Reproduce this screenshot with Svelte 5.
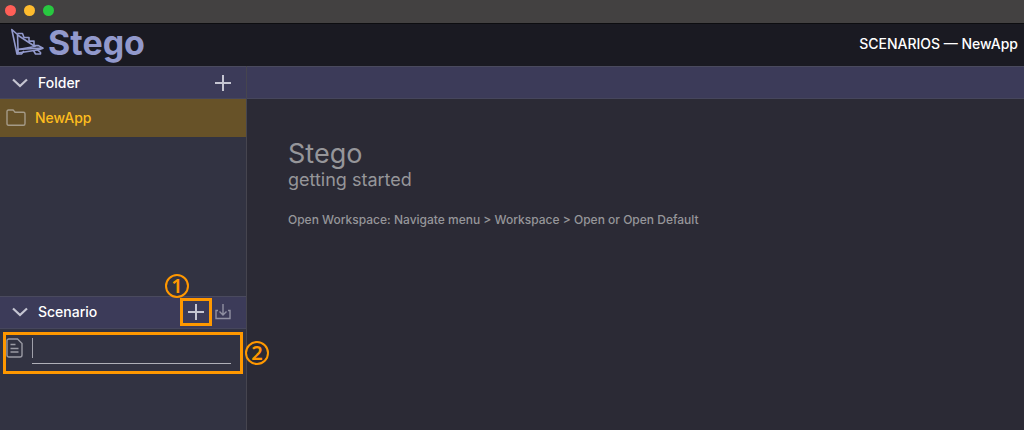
<script lang="ts">
	interface Folder {
		id: number;
		name: string;
	}

	const folders: Folder[] = [{ id: 1, name: 'NewApp' }];

	let selectedId = $state(1);
	let draftName = $state('');
	let folderOpen = $state(true);
	let scenarioOpen = $state(true);

	const selected = $derived(folders.find((f) => f.id === selectedId));
</script>

{#snippet chevron()}
	<svg width="16" height="10" viewBox="0 0 16 10" aria-hidden="true">
		<path d="M1 1.5 8 8l7-6.5" fill="none" stroke="currentColor" stroke-width="2.2" />
	</svg>
{/snippet}

{#snippet plus()}
	<svg width="16" height="16" viewBox="0 0 16 16" aria-hidden="true">
		<path d="M8 0v16M0 8h16" stroke="currentColor" stroke-width="2" />
	</svg>
{/snippet}

<div class="window">
	<div class="titlebar">
		<button type="button" class="light close" aria-label="Close"></button>
		<button type="button" class="light minimize" aria-label="Minimize"></button>
		<button type="button" class="light zoom" aria-label="Zoom"></button>
	</div>

	<header class="brandbar">
		<div class="brand">
			<svg width="34" height="30" viewBox="0 0 34 30" aria-hidden="true">
				<g fill="none" stroke="currentColor" stroke-width="1.6" stroke-linejoin="round">
					<path d="M1.8 1.5 7.5 6.500 8 21.500 7 26Z" />
					<path d="M7.3 5.5h5.200l1.500 4h5v3.600h5v4.500h4.500l4.500 2.600-4 1.500L8 25v-3.500l25-1.500" />
					<path d="M7.5 7 25 18.500 8 21.500" />
					<path d="M7 26h4.500l2.500-3M23.500 22.500l2 3.500h5v-1.500l-3-2.500" />
				</g>
			</svg>
			<span class="wordmark">Stego</span>
		</div>
		<div class="location">SCENARIOS — {selected?.name}</div>
	</header>

	<div class="workspace">
		<aside class="sidebar">
			<section>
				<div class="bar">
					<button type="button" class="fold" aria-expanded={folderOpen} onclick={() => (folderOpen = !folderOpen)}>
						{@render chevron()}
						<span>Folder</span>
					</button>
					<button type="button" class="action" aria-label="Add folder">{@render plus()}</button>
				</div>
				{#if folderOpen}
					{#each folders as folder (folder.id)}
						<button
							type="button"
							class="item"
							class:selected={folder.id === selectedId}
							onclick={() => (selectedId = folder.id)}
						>
							<svg width="20" height="18" viewBox="0 0 20 18" aria-hidden="true">
								<path
									d="M1 14.5v-12Q1 1 2.5 1h4.2q.8 0 1.3.8l1 1.4h8.5Q19 3.2 19 4.7v9.8q0 1.8-1.5 1.8h-15Q1 16.3 1 14.5Z"
									fill="none"
									stroke="currentColor"
									stroke-width="1.4"
								/>
							</svg>
							<span>{folder.name}</span>
						</button>
					{/each}
				{/if}
			</section>

			<section class="scenarios">
				<div class="bar">
					<button type="button" class="fold" aria-expanded={scenarioOpen} onclick={() => (scenarioOpen = !scenarioOpen)}>
						{@render chevron()}
						<span>Scenario</span>
					</button>
					<div class="step">
						<button type="button" class="action" aria-label="Add scenario">{@render plus()}</button>
						<span class="frame"></span>
						<span class="badge above">1</span>
					</div>
					<button type="button" class="action dim" aria-label="Import scenario">
						<svg width="16" height="16" viewBox="0 0 16 16" aria-hidden="true">
							<g fill="none" stroke="currentColor" stroke-width="1.4">
								<path d="M3 6.5H1v8h14v-8h-2" />
								<path d="M8 0v11M4.5 7.5 8 11l3.5-3.5" />
							</g>
						</svg>
					</button>
				</div>
				{#if scenarioOpen}
					<div class="step draft">
						<svg width="18" height="20" viewBox="0 0 18 20" aria-hidden="true">
							<g fill="none" stroke="currentColor" stroke-width="1.4">
								<path d="M3 1h8.5L16 5.500V17q0 2-2 2H3q-2 0-2-2V3q0-2 2-2Z" />
								<path d="M4.5 6.500h5M4.500 10.500h8M4.500 14h8" />
							</g>
						</svg>
						<label class="field">
							<span class="caret"></span>
							<input type="text" aria-label="Scenario name" bind:value={draftName} />
						</label>
						<span class="frame"></span>
						<span class="badge beside">2</span>
					</div>
				{/if}
			</section>
		</aside>

		<main>
			<div class="bar"></div>
			<div class="welcome">
				<h1>Stego</h1>
				<h2>getting started</h2>
				<p>Open Workspace: Navigate menu &gt; Workspace &gt; Open or Open Default</p>
			</div>
		</main>
	</div>
</div>

<style>
	:global(body) {
		margin: 0;
		background: #2b2a35;
	}
	.window {
		display: flex;
		flex-direction: column;
		min-height: 100vh;
		background: #2b2a35;
		color: #fff;
		font-family: Inter, 'Liberation Sans', sans-serif;
		font-size: 14px;
		font-weight: 500;
		line-height: 20px;
	}
	.window *,
	.window {
		box-sizing: border-box;
	}
	button,
	input {
		margin: 0;
		padding: 0;
		border: 0;
		background: none;
		color: inherit;
		font: inherit;
	}
	svg {
		display: block;
		flex: none;
	}
	.titlebar {
		display: flex;
		align-items: center;
		gap: 8px;
		height: 24px;
		padding: 0 5px 3px;
		background: #434141;
		border-bottom: 1px solid #0d0d10;
	}
	.light {
		width: 11px;
		height: 11px;
		border-radius: 50%;
	}
	.close {
		background: #ff5f57;
	}
	.minimize {
		background: #febc2e;
	}
	.zoom {
		background: #28c840;
	}
	.brandbar {
		display: flex;
		align-items: center;
		justify-content: space-between;
		height: 42px;
		padding: 0 6px 4px 10px;
		background: #1a1a22;
	}
	.location {
		margin-top: 2px;
	}
	.brand {
		display: flex;
		align-items: center;
		gap: 4px;
		color: #9299cc;
	}
	.wordmark {
		font-size: 34px;
		font-weight: 700;
		line-height: 36px;
	}
	.workspace {
		display: flex;
		flex: 1;
	}
	.sidebar {
		display: grid;
		grid-template-rows: 12fr 7fr;
		grid-template-columns: minmax(0, 1fr);
		width: 247px;
		flex: none;
		background: #323342;
		border-right: 1px solid #46454f;
	}
	.bar {
		display: flex;
		align-items: center;
		height: 33px;
		background: #3c3b59;
		border-top: 1px solid #4a4a5e;
		border-bottom: 1px solid #46465c;
	}
	.sidebar .bar {
		padding-right: 15px;
	}
	.fold {
		display: flex;
		flex: 1;
		align-items: center;
		gap: 10px;
		padding-left: 12px;
		text-align: left;
	}
	.fold svg,
	.action {
		color: #c5c5d2;
	}
	.action {
		display: block;
	}
	.action.dim {
		color: #9090a2;
	}
	.scenarios .bar {
		gap: 11px;
	}
	.item {
		display: flex;
		align-items: center;
		gap: 9px;
		width: 100%;
		height: 38px;
		padding-left: 6px;
		text-align: left;
	}
	.item.selected {
		background: #675228;
		color: #fdbd1e;
	}
	.item svg {
		color: #a59b88;
	}
	.step {
		position: relative;
	}
	.draft {
		display: flex;
		gap: 8px;
		margin: 3px 3px 0;
		padding: 6px 12px 10px 3px;
	}
	.draft svg {
		color: #9a9aa4;
	}
	.field {
		display: flex;
		flex: 1;
		min-width: 0;
		height: 26px;
		border-bottom: 1px solid #b0b0b8;
	}
	.caret {
		width: 1px;
		height: 20px;
		background: #a0a0aa;
	}
	.field input {
		flex: 1;
		min-width: 0;
		height: 20px;
		outline: none;
		caret-color: transparent;
	}
	.frame {
		position: absolute;
		inset: 0;
		border: 3px solid #ff9800;
		pointer-events: none;
	}
	.bar .frame {
		inset: -6px -8px;
	}
	.badge {
		position: absolute;
		display: flex;
		align-items: center;
		justify-content: center;
		width: 24px;
		height: 24px;
		border: 2px solid #ff9800;
		border-radius: 50%;
		color: #ff9800;
		font-family: 'Noto Sans', sans-serif;
		font-size: 20px;
		font-weight: 600;
	}
	.above {
		right: 100%;
		bottom: 100%;
		margin: 0 -1px 6px 0;
	}
	.beside {
		top: 9px;
		left: 100%;
		margin-left: 2px;
	}
	main {
		flex: 1;
		min-width: 0;
	}
	.welcome {
		padding: 39px 41px;
		color: #96969a;
	}
	h1,
	h2,
	p {
		margin: 0;
		font-weight: 500;
	}
	h1 {
		font-size: 27px;
		font-weight: 400;
		line-height: 32px;
	}
	h2 {
		font-size: 18px;
		font-weight: 400;
		line-height: 20px;
	}
	p {
		margin-top: 20px;
		font-size: 12px;
	}
</style>
